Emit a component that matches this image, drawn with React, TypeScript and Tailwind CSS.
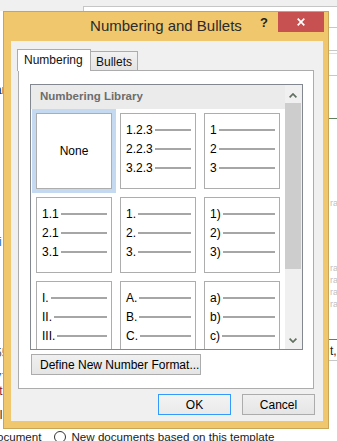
import React from "react";

const cells: (string[] | null)[] = [
  null,
  ["1.2.3", "2.2.3", "3.2.3"],
  ["1", "2", "3"],
  ["1.1", "2.1", "3.1"],
  ["1.", "2.", "3."],
  ["1)", "2)", "3)"],
  ["I.", "II.", "III."],
  ["A.", "B.", "C."],
  ["a)", "b)", "c)"],
];

function Cell({ items, selected }: { items: string[] | null; selected: boolean }) {
  return (
    <div className={selected ? "p-[4px] bg-[#c5d9f1]" : "p-[4px]"}>
      <div className="h-[76px] w-[76px] border border-[#adadad] bg-white">
        {items ? (
          <div className="flex flex-col pl-[5px] pr-[4px] pt-[6px]">
            {items.map((t) => (
              <div key={t} className="flex h-[19px] items-center">
                <span className="text-[12px] leading-[14px] text-black">{t}</span>
                <div className="ml-[2px] h-[2px] flex-1 bg-[#a6a6a6]" />
              </div>
            ))}
          </div>
        ) : (
          <div className="flex h-full items-center justify-center text-[12px] text-black">None</div>
        )}
      </div>
    </div>
  );
}

function Chevron({ up }: { up: boolean }) {
  return (
    <svg width="8" height="5" viewBox="0 0 8 5">
      <polyline
        points={up ? "0.6,4.4 4,1 7.4,4.4" : "0.6,0.6 4,4 7.4,0.6"}
        fill="none"
        stroke="#5f705f"
        strokeWidth="1.7"
      />
    </svg>
  );
}

export default function App() {
  return (
    <div className="relative h-[441px] w-[337px] overflow-hidden bg-white font-['Liberation_Sans',Arial,sans-serif]">
      {/* background desktop / document */}
      <div className="absolute left-0 top-0 h-[11px] w-[83px] bg-[#f0f0f0]" />
      <div className="absolute left-[83px] top-0 h-[6px] w-[254px] bg-[#f0f0f0]" />
      <div className="absolute left-[83px] top-[6px] h-[20px] w-[254px] border-l border-t border-[#c6c6c6] bg-white" />
      <div className="absolute left-[329px] top-[27px] h-px w-[8px] bg-[#c8c8c8]" />
      <div className="absolute left-[329px] top-[50px] h-px w-[8px] bg-[#c8c8c8]" />
      <div className="absolute left-[329px] top-[53px] h-px w-[8px] bg-[#dcdcdc]" />
      <div className="absolute left-[329px] top-[75px] h-px w-[8px] bg-[#c8c8c8]" />
      <div className="absolute left-[329px] top-[118px] h-px w-[8px] bg-[#5f7f5f]" />
      <div className="absolute left-[329px] top-[339px] h-px w-[8px] bg-[#5f7f5f]" />
      <div className="absolute left-[329px] top-[360px] h-px w-[8px] bg-[#c8c8c8]" />
      <span className="absolute left-[330px] top-[345px] text-[12px] leading-[12px] text-[#222]">t,</span>
      <span className="absolute left-[330px] top-[198px] text-[9px] leading-[10px] text-[#c0c0c0]">ra</span>
      <span className="absolute left-[330px] top-[263px] text-[9px] leading-[10px] text-[#c0c0c0]">ra</span>
      <span className="absolute left-[330px] top-[275px] text-[9px] leading-[10px] text-[#c0c0c0]">ra</span>
      <span className="absolute left-[330px] top-[287px] text-[9px] leading-[10px] text-[#c0c0c0]">ra</span>
      <span className="absolute left-[330px] top-[299px] text-[9px] leading-[10px] text-[#c0c0c0]">ra</span>
      <span className="absolute left-[-5px] top-[84px] text-[12px] leading-[12px] text-[#222]">ar</span>
      <span className="absolute left-[-5px] top-[236px] text-[12px] leading-[12px] text-[#2a6ebb]">ri</span>
      <span className="absolute left-[-5px] top-[347px] text-[12px] leading-[12px] text-[#555]">55</span>
      <span className="absolute left-[-5px] top-[372px] text-[12px] leading-[12px] text-[#2a6ebb]">77</span>
      <span className="absolute left-[-4px] top-[385px] text-[12px] leading-[12px] text-[#8a1c2c]">tt</span>
      <span className="absolute left-[-3px] top-[409px] text-[12px] leading-[12px] text-[#222]">il</span>
      <div className="absolute left-[-3px] top-[430px] flex h-[13px] items-center text-[11.6px] leading-[13px] text-[#1a1a1a]">
        <span>ocument</span>
        <span className="ml-[13px] h-[12px] w-[12px] rounded-full border border-[#333] bg-white" />
        <span className="ml-[5px]">New documents based on this template</span>
      </div>

      {/* dialog window */}
      <div className="absolute left-[3px] top-[11px] flex h-[418px] w-[326px] flex-col border border-[#c9a55a] bg-[#f0c76c]">
        <div className="grid h-[29px] grid-cols-[1fr_auto_1fr]">
          <div />
          <div className="flex items-center text-[15px] text-[#2b2b2b]">Numbering and Bullets</div>
          <div className="flex items-start justify-end">
            <span className="mr-[10px] flex h-[20px] items-center text-[13px] font-bold leading-none text-[#222]">?</span>
            <div className="mr-[4px] flex h-[20px] w-[46px] items-center justify-center bg-[#c75050]">
              <svg width="8" height="8" viewBox="0 0 8 8">
                <path d="M0.7 0.7L7.3 7.3M7.3 0.7L0.7 7.3" stroke="#fff" strokeWidth="1.7" fill="none" />
              </svg>
            </div>
          </div>
        </div>

        <div className="ml-[7px] flex h-[380px] w-[312px] flex-col bg-[#f0f0f0] pt-[8px]">
          {/* tabs */}
          <div className="ml-[6px] flex h-[21px] items-end">
            <div className="relative z-10 -mb-px h-[22px] w-[74px] border-x border-t border-[#acacac] bg-white pl-[6px] pt-[3px] text-[12px] leading-[14px] text-[#111]">
              Numbering
            </div>
            <div className="h-[19px] w-[47px] border-r border-t border-[#acacac] bg-gradient-to-b from-[#f2f2f2] to-[#e4e4e4] pl-[5px] pt-[3px] text-[12px] leading-[14px] text-[#111]">
              Bullets
            </div>
          </div>

          {/* panel */}
          <div className="ml-[7px] flex h-[319px] w-[296px] flex-col border border-[#acacac] bg-white">
            <div className="ml-[11px] mt-[13px] flex h-[266px] w-[273px] border border-[#828790] bg-white">
              <div className="flex w-[254px] flex-col">
                <div className="flex h-[24px] shrink-0 items-center bg-[#ebebeb] pl-[9px] text-[11.5px] font-bold text-[#6d6d6d]">
                  Numbering Library
                </div>
                <div className="flex-1 overflow-hidden pl-px">
                  <div className="grid grid-cols-[84px_84px_84px]">
                    {cells.map((c, i) => (
                      <Cell key={i} items={c} selected={i === 0} />
                    ))}
                  </div>
                </div>
              </div>
              <div className="flex w-[17px] flex-col bg-[#f0f0f0]">
                <div className="flex h-[18px] shrink-0 items-center justify-center pr-px pt-[2px]">
                  <Chevron up />
                </div>
                <div className="h-[166px] w-[16px] shrink-0 bg-[#cdcdcd]" />
                <div className="flex-1" />
                <div className="flex h-[18px] shrink-0 items-center justify-center pr-px">
                  <Chevron up={false} />
                </div>
              </div>
            </div>
            <div className="ml-[12px] mt-[4px] flex h-[21px] w-[170px] items-center border border-[#acacac] bg-gradient-to-b from-[#f0f0f0] to-[#e5e5e5] pl-[8px] text-[12px] text-black">
              Define New Number Format...
            </div>
          </div>

          {/* bottom buttons */}
          <div className="mt-[5px] flex justify-end gap-[11px] pr-[8px]">
            <div className="flex h-[21px] w-[73px] items-center justify-center border border-[#3399ff] bg-gradient-to-b from-[#f3f3f3] to-[#eaeaea] text-[12px] text-black">
              OK
            </div>
            <div className="flex h-[21px] w-[73px] items-center justify-center border border-[#acacac] bg-gradient-to-b from-[#f0f0f0] to-[#e5e5e5] text-[12px] text-black">
              Cancel
            </div>
          </div>
        </div>
      </div>
    </div>
  );
}
